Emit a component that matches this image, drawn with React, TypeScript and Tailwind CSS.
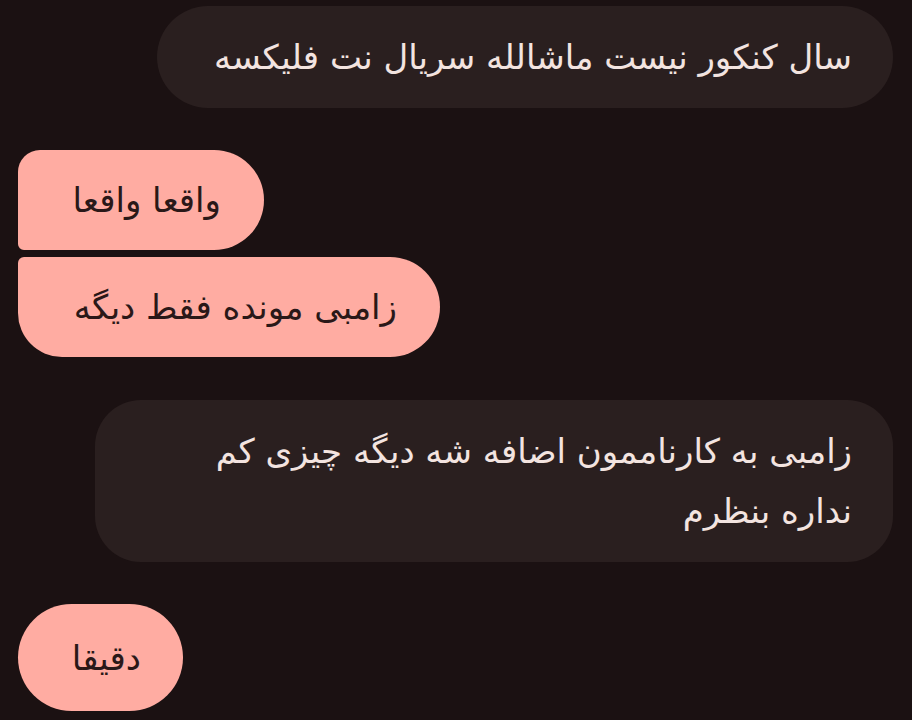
import React from "react";

const font = { fontFamily: '"DejaVu Sans", "Noto Sans", sans-serif' };

export default function App() {
  return (
    <div
      className="w-[912px] h-[720px] overflow-hidden bg-[#1b1112] flex flex-col pt-[6px] px-[18px] pr-[19px]"
      style={font}
    >
      <div className="self-end" dir="rtl">
        <div className="w-[736px] h-[102px] rounded-[51px] bg-[#2a1f1f] text-[#f3e4e0] text-[34px] leading-[60px] pr-[41px] flex items-center whitespace-nowrap">
          سال کنکور نیست ماشالله سریال نت فلیکسه
        </div>
      </div>

      <div className="self-start mt-[42px]" dir="rtl">
        <div className="w-[246px] h-[100px] rounded-tl-[22px] rounded-bl-[6px] rounded-r-[50px] bg-[#ffaca2] text-[#2a1818] text-[34px] leading-[60px] pr-[43px] flex items-center whitespace-nowrap">
          واقعا واقعا
        </div>
      </div>

      <div className="self-start mt-[7px]" dir="rtl">
        <div className="w-[422px] h-[100px] rounded-tl-[6px] rounded-bl-[44px] rounded-r-[50px] bg-[#ffaca2] text-[#2a1818] text-[34px] leading-[60px] pr-[43px] flex items-center whitespace-nowrap">
          زامبی مونده فقط دیگه
        </div>
      </div>

      <div className="self-end mt-[43px]" dir="rtl">
        <div className="w-[798px] h-[162px] rounded-[46px] bg-[#2a1f1f] text-[#f3e4e0] text-[34px] leading-[60px] pr-[41px] pl-[41px] py-[21px] whitespace-nowrap">
          زامبی به کارناممون اضافه شه دیگه چیزی کم
          <br />
          نداره بنظرم
        </div>
      </div>

      <div className="self-start mt-[42px]" dir="rtl">
        <div className="w-[165px] h-[107px] rounded-[54px] bg-[#ffaca2] text-[#2a1818] text-[34px] leading-[60px] pr-[42px] flex items-center whitespace-nowrap">
          دقیقا
        </div>
      </div>
    </div>
  );
}
